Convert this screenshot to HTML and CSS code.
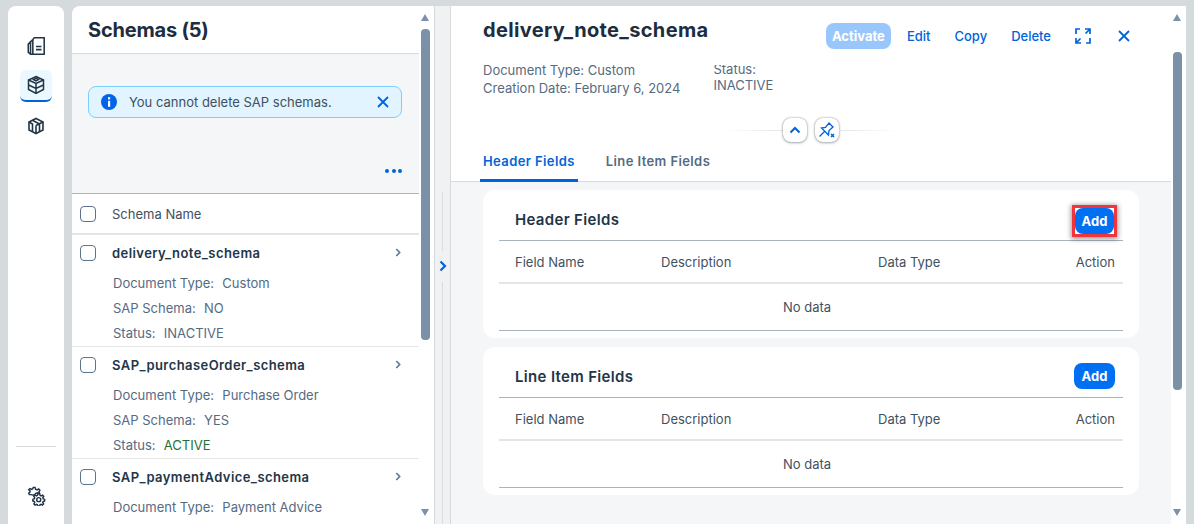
FILE: index.html

```html
<!DOCTYPE html>
<html lang="en">
<head>
  <meta charset="UTF-8" />
  <meta name="viewport" content="width=device-width, initial-scale=1.0" />
  <title>Schemas</title>
  <link rel="stylesheet" href="styles.css">
</head>
<body>
  <div class="app">
    <nav class="rail">
      <div class="rail-top">
        <button class="rail-btn">
          <svg width="20" height="20" viewBox="0 0 22 22" fill="none" stroke="#223548" stroke-width="1.7"><path d="M9 2h11v18H7.500V4z"/><path d="M7.500 4 5 6.500V20h3M5 6.500 2.500 9v9l2.500 2"/><path d="M11 11.500h6M11 15h6" stroke-width="1.800"/></svg>
        </button>
        <button class="rail-btn rail-btn-active">
          <svg width="20" height="20" viewBox="0 0 20 20" fill="none" stroke="#223548" stroke-width="1.5"><path d="M10 1.500 17.500 5v9.500L10 18.500l-7.500-4V5z"/><path d="M2.500 5 10 8.500 17.500 5M2.500 10 10 13.500l7.500-3.500M10 8.500v10M7.500 4.500 10 6l2.500-1.500L10 3.200z"/></svg>
        </button>
        <button class="rail-btn">
          <svg width="18" height="18" viewBox="0 0 18 18" fill="none" stroke="#223548" stroke-width="1.6"><path d="M9 1.500 16 5v8l-7 3.500L2 13V5z"/><path d="M9 8.500V16.500M9 8.500 16 5M5.500 3.200 12.500 7v7.500M2 5l3.500 2v7.500"/></svg>
        </button>
      </div>
      <div class="rail-bottom">
        <svg width="20" height="20" viewBox="0 0 22 22" fill="none" stroke="#223548" stroke-width="1.6"><path d="M8 1.500h2l.5 2 1.700.8 1.800-1 1.300 1.400-1 1.800.4 1H13a5 5 0 0 0-4 2.500H7.500L6 9.500H3.700L3 7.800l1.500-1.300v-1L3 4.200l1.300-1.400 1.800 1 1.400-.8z"/><path d="M13 8.500h2l.4 1.700 1.300.6 1.600-.8 1.200 1.400-1 1.500.3 1.100 1.700.7v1.800l-1.700.6-.4 1.100 1 1.500-1.300 1.300-1.500-.9-1.200.5-.4 1.700h-1.900l-.5-1.700-1.100-.5-1.600.9-1.200-1.300.9-1.500-.4-1.100-1.700-.6v-1.800l1.700-.7.4-1.100-1-1.500 1.300-1.400 1.600.8 1.100-.6z"/><circle cx="14" cy="15" r="2.200"/></svg>
      </div>
    </nav>

    <section class="list-panel">
      <div class="list-body">
        <h2 class="list-title">Schemas (5)</h2>
        <div class="list-sub">
          <div class="notice">
            <svg class="notice-icon" width="16" height="16" viewBox="0 0 16 16"><circle cx="8" cy="8" r="8" fill="#0064e6"/><rect x="7" y="6.800" width="2.200" height="6" fill="#fff"/><rect x="7" y="3.200" width="2.200" height="2.200" fill="#fff"/></svg>
            <span class="notice-text">You cannot delete SAP schemas.</span>
            <svg width="12" height="12" viewBox="0 0 12 12" fill="none" stroke="#0064d9" stroke-width="1.800"><path d="M1 1l10 10M11 1 1 11"/></svg>
          </div>
          <div class="more">
            <span class="dot"></span><span class="dot"></span><span class="dot"></span>
          </div>
        </div>
        <div class="list-head">
          <span class="check"></span>
          <span>Schema Name</span>
        </div>
        <div class="item">
          <div class="item-title">
            <span class="check"></span>
            <b>delivery_note_schema</b>
            <svg class="chev" width="6" height="9" viewBox="0 0 7 10" fill="none" stroke="#5b738b" stroke-width="1.800"><path d="M1.500 1l4 4-4 4"/></svg>
          </div>
          <p class="attr">Document Type:&nbsp; <span>Custom</span></p>
          <p class="attr">SAP Schema:&nbsp; <span>NO</span></p>
          <p class="attr">Status:&nbsp; <span>INACTIVE</span></p>
        </div>
        <div class="item">
          <div class="item-title">
            <span class="check"></span>
            <b>SAP_purchaseOrder_schema</b>
            <svg class="chev" width="6" height="9" viewBox="0 0 7 10" fill="none" stroke="#5b738b" stroke-width="1.800"><path d="M1.500 1l4 4-4 4"/></svg>
          </div>
          <p class="attr">Document Type:&nbsp; <span>Purchase Order</span></p>
          <p class="attr">SAP Schema:&nbsp; <span>YES</span></p>
          <p class="attr">Status:&nbsp; <span class="active">ACTIVE</span></p>
        </div>
        <div class="item">
          <div class="item-title">
            <span class="check"></span>
            <b>SAP_paymentAdvice_schema</b>
            <svg class="chev" width="6" height="9" viewBox="0 0 7 10" fill="none" stroke="#5b738b" stroke-width="1.800"><path d="M1.500 1l4 4-4 4"/></svg>
          </div>
          <p class="attr">Document Type:&nbsp; <span>Payment Advice</span></p>
        </div>
      </div>
      <div class="scrollbar">
        <span class="arrow-up"></span>
        <span class="thumb thumb-list"></span>
        <span class="arrow-down"></span>
      </div>
    </section>

    <div class="splitter">
      <span class="split-line split-line-top"></span>
      <svg class="split-chev" width="8" height="12" viewBox="0 0 8 12" fill="none" stroke="#0064d9" stroke-width="2.200"><path d="M1.500 1.500 6 6l-4.500 4.500"/></svg>
      <span class="split-line"></span>
    </div>

    <section class="detail">
      <div class="detail-body">
        <header class="detail-head">
          <div class="title-row">
            <h1 class="detail-title">delivery_note_schema</h1>
            <div class="actions">
              <button class="btn-activate">Activate</button>
              <button class="btn-link">Edit</button>
              <button class="btn-link">Copy</button>
              <button class="btn-link">Delete</button>
              <svg class="act-icon" width="16" height="16" viewBox="0 0 16 16" fill="none" stroke="#0064d9" stroke-width="1.700"><path d="M10 1h5v5M15 1l-4.500 4.500M6 15H1v-5M1 15l4.500-4.500M1 6V1h4M15 10v5h-4"/></svg>
              <svg class="act-icon act-close" width="12" height="12" viewBox="0 0 12 12" fill="none" stroke="#0064d9" stroke-width="1.800"><path d="M1 1l10 10M11 1 1 11"/></svg>
            </div>
          </div>
          <div class="meta">
            <div class="meta-col">
              <div>Document Type: Custom</div>
              <div>Creation Date: February 6, 2024</div>
            </div>
            <div class="meta-col meta-col-status">
              <div>Status:</div>
              <div>INACTIVE</div>
            </div>
          </div>
          <div class="collapse-row">
            <span class="collapse-line"></span>
            <button class="round-btn">
              <svg width="12" height="8" viewBox="0 0 12 8" fill="none" stroke="#0064d9" stroke-width="2"><path d="M1.500 6.500 6 2l4.500 4.500"/></svg>
            </button>
            <button class="round-btn">
              <svg width="18" height="18" viewBox="0 0 18 18" fill="none" stroke="#0064d9" stroke-width="1.300"><path d="M1.500 15.500 6.500 10.500M3.500 7l7 7 .5-4.500 4-3.500L11 2 7.500 6.500z"/><path d="M13 13l3 3M16 13l-3 3" stroke-width="1.500"/></svg>
            </button>
            <span class="collapse-line collapse-line-r"></span>
          </div>
          <div class="tabs">
            <span class="tab tab-active">Header Fields</span>
            <span class="tab">Line Item Fields</span>
          </div>
        </header>
        <div class="detail-content">
          <div class="card">
            <div class="card-head">
              <h3>Header Fields</h3>
              <span class="add-mark"><button class="btn-add">Add</button></span>
            </div>
            <div class="table-row">
              <span class="col-name">Field Name</span>
              <span class="col-desc">Description</span>
              <span class="col-type">Data Type</span>
              <span class="col-action">Action</span>
            </div>
            <div class="no-data">No data</div>
          </div>
          <div class="card">
            <div class="card-head">
              <h3>Line Item Fields</h3>
              <button class="btn-add">Add</button>
            </div>
            <div class="table-row">
              <span class="col-name">Field Name</span>
              <span class="col-desc">Description</span>
              <span class="col-type">Data Type</span>
              <span class="col-action">Action</span>
            </div>
            <div class="no-data">No data</div>
          </div>
        </div>
      </div>
      <div class="scrollbar">
        <span class="arrow-up"></span>
        <span class="thumb thumb-detail"></span>
        <span class="arrow-down"></span>
      </div>
    </section>
  </div>
</body>
</html>
```

FILE: styles.css

```css
* {
  box-sizing: border-box;
}
html, body {
  height: 100%;
}
body {
  margin: 0;
  overflow: hidden;
  font-family: Inter, "Noto Sans", Arial, sans-serif;
  font-size: 13px;
  color: #223548;
  background-color: #d5dadd;
}
button {
  font-family: inherit;
  border: 0;
  padding: 0;
  background: none;
}
.app {
  display: flex;
  height: 524px;
  padding: 6px 8px 0 8px;
}

/* left rail */
.rail {
  width: 56px;
  margin-right: 8px;
  padding: 24px 0 18px;
  display: flex;
  flex-direction: column;
  justify-content: space-between;
  background-color: #fff;
  border-radius: 8px 8px 0 0;
}
.rail-top {
  display: flex;
  flex-direction: column;
  align-items: center;
}
.rail-btn {
  width: 32px;
  height: 32px;
  margin-bottom: 8px;
  display: flex;
  align-items: center;
  justify-content: center;
}
.rail-btn-active {
  background-color: #ebf8ff;
  border-radius: 6px;
  border-bottom: 2px solid #0064d9;
}
.rail-bottom {
  margin: 0 8px;
  padding-top: 39px;
  border-top: 1px solid #d9d9d9;
  display: flex;
  justify-content: center;
}

/* schema list */
.list-panel {
  width: 362px;
  display: flex;
  background-color: #fff;
  border-radius: 8px 0 0 0;
  overflow: hidden;
}
.list-body {
  width: 347px;
  flex: none;
}
.list-title {
  height: 48px;
  margin: 0;
  padding: 8px 16px 0;
  font-size: 20px;
  line-height: 32px;
  font-weight: 700;
  letter-spacing: -0.2px;
  color: #1d2d3e;
  border-bottom: 1px solid #d9dcdf;
  box-shadow: 0 1px 2px rgba(0, 0, 0, 0.05);
}
.list-sub {
  height: 140px;
  padding: 32px 17px 0 16px;
  background-color: #f5f6f7;
  border-bottom: 1px solid #a9b4be;
}
.notice {
  height: 32px;
  padding: 0 12px;
  display: flex;
  align-items: center;
  background-color: #e1f4ff;
  border: 1px solid #7bcfff;
  border-radius: 8px;
}
.notice-icon {
  flex: none;
  margin-right: 12px;
}
.notice-text {
  flex: 1;
  color: #3f5161;
}
.more {
  margin-top: 51px;
  display: flex;
  justify-content: flex-end;
  gap: 2.500px;
}
.dot {
  width: 4px;
  height: 4px;
  border-radius: 50%;
  background-color: #0064d9;
}
.list-head {
  height: 41px;
  padding: 0 8px;
  display: flex;
  align-items: center;
  gap: 16px;
  color: #3f5161;
  border-bottom: 2px solid #e5e5e5;
}
.check {
  flex: none;
  width: 16px;
  height: 16px;
  background-color: #fff;
  border: 1px solid #5b738b;
  border-radius: 4px;
}
.item {
  height: 112px;
  padding: 0 8px;
  border-bottom: 1px solid #e5e5e5;
}
.item-title {
  height: 36px;
  padding-bottom: 1px;
  display: flex;
  align-items: center;
  gap: 16px;
  color: #223548;
}
.item-title b {
  flex: 1;
  font-weight: 600;
  letter-spacing: 0.43px;
}
.chev {
  margin-right: 10px;
}
.attr {
  height: 25px;
  margin: 0 0 0 33px;
  line-height: 25px;
  color: #556b82;
}
.attr span {
  margin-left: 1px;
  color: #556b82;
}
.attr .active {
  color: #256f3a;
}

/* scrollbars */
.scrollbar {
  position: relative;
  width: 15px;
  flex: none;
  background-color: #fff;
}
.arrow-up, .arrow-down {
  position: absolute;
  left: 2px;
  width: 0;
  height: 0;
  border-left: 4.500px solid transparent;
  border-right: 4.500px solid transparent;
}
.arrow-up {
  top: 8px;
  border-bottom: 7px solid #7b91a8;
}
.arrow-down {
  bottom: 8px;
  border-top: 7px solid #7b91a8;
}
.thumb {
  position: absolute;
  left: 2px;
  width: 9px;
  border-radius: 4px;
  background-color: #7b91a8;
}
.thumb-list {
  top: 23px;
  height: 311px;
}
.thumb-detail {
  top: 46px;
  height: 338px;
}

/* splitter */
.splitter {
  width: 17px;
  padding-top: 186px;
  display: flex;
  flex-direction: column;
  align-items: center;
  background-color: #eff1f2;
  border-right: 1px solid #d9d9d9;
  border-left: 1px solid #d9d9d9;
}
.split-line {
  flex: 1;
  width: 1px;
  background-color: #d9dcdf;
}
.split-line-top {
  flex: none;
  height: 59px;
}
.split-chev {
  margin: 9px 0 10px;
}

/* detail */
.detail {
  flex: 1;
  display: flex;
  background-color: #fff;
  overflow: hidden;
}
.detail-body {
  width: 720px;
  flex: none;
}
.detail-head {
  height: 176px;
  padding: 0 32px;
  background-color: #fff;
  border-bottom: 1px solid #d9dcdf;
}
.title-row {
  height: 59px;
  display: flex;
  justify-content: space-between;
  align-items: flex-start;
}
.detail-title {
  margin: 9px 0 0;
  font-size: 20px;
  line-height: 30px;
  font-weight: 700;
  letter-spacing: 0.35px;
  color: #1d2d3e;
}
.actions {
  margin-top: 17px;
  display: flex;
  align-items: center;
}
.btn-activate {
  width: 65px;
  height: 26px;
  margin-right: 16px;
  font-size: 13px;
  font-weight: 700;
  color: #fff;
  background-color: #99c7fb;
  border-radius: 8px;
}
.btn-link {
  margin-right: 24px;
  font-size: 13px;
  font-weight: 500;
  color: #0064d9;
}
.act-icon {
  flex: none;
}
.act-close {
  margin-left: 27px;
  margin-right: 9px;
}
.meta {
  height: 52px;
  display: flex;
  gap: 33px;
  line-height: 18px;
  color: #556b82;
  overflow: hidden;
}
.meta-col {
  margin-top: -4px;
}
.meta-col-status {
  line-height: 16px;
}
.collapse-row {
  height: 26px;
  display: flex;
  align-items: center;
  justify-content: center;
  gap: 8px;
}
.collapse-line {
  width: 60px;
  height: 1px;
  margin-right: -8px;
  background: linear-gradient(to right, transparent, #e5e5e5);
}
.collapse-line-r {
  margin-left: -8px;
  margin-right: 0;
  background: linear-gradient(to left, transparent, #e5e5e5);
}
.round-btn {
  width: 24px;
  height: 24px;
  display: flex;
  align-items: center;
  justify-content: center;
  background-color: #fff;
  border-radius: 8px;
  box-shadow: 0 0 2px rgba(34, 53, 72, 0.5), 0 1px 3px rgba(34, 53, 72, 0.3);
}
.tabs {
  margin: 5px 0 0 -3px;
  display: flex;
  gap: 25px;
}
.tab {
  height: 34px;
  padding: 5px 3px 0;
  font-weight: 600;
  letter-spacing: 0.4px;
  color: #556b82;
}
.tab-active {
  color: #0064d9;
  border-bottom: 3px solid #0064d9;
}
.detail-content {
  height: 342px;
  padding: 8px 32px 0;
  background-color: #f5f6f7;
}
.card {
  height: 148px;
  margin-bottom: 9px;
  padding: 0 16px;
  background-color: #fff;
  border-radius: 12px;
}
.card-head {
  height: 51px;
  padding: 8px 8px 0 16px;
  display: flex;
  align-items: center;
  justify-content: space-between;
  border-bottom: 1px solid #a9b4be;
}
.card-head h3 {
  margin: 0;
  font-size: 15px;
  font-weight: 600;
  letter-spacing: 0.33px;
  color: #223548;
}
.btn-add {
  display: block;
  width: 41px;
  height: 26px;
  font-size: 13px;
  font-weight: 700;
  color: #fff;
  background-color: #0070f2;
  border-radius: 8px;
}
.add-mark {
  display: block;
  margin: 3px -2px 0 0;
  border: 3px solid #f0353f;
  box-shadow: 0 1px 5px 1px rgba(0, 0, 0, 0.4);
}
.add-mark .btn-add {
  width: 39px;
}
.table-row {
  height: 43px;
  padding: 0 8px 0 16px;
  display: flex;
  align-items: center;
  color: #3f5161;
  border-bottom: 2px solid #e5e5e5;
}
.col-name {
  width: 146px;
}
.col-desc {
  width: 217px;
}
.col-type {
  flex: 1;
}
.no-data {
  height: 47px;
  padding-right: 8px;
  line-height: 47px;
  text-align: center;
  color: #3f5161;
  border-bottom: 1px solid #a9b4be;
}
```
